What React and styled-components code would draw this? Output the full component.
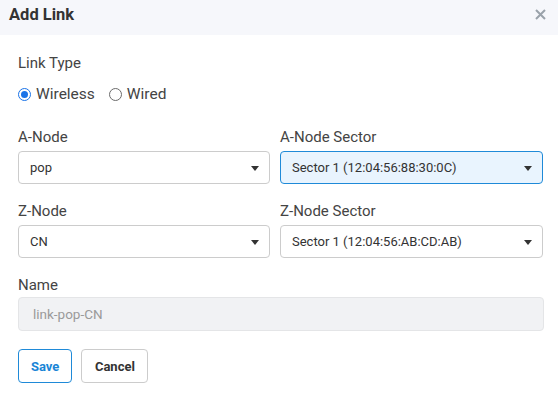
import React from 'react';
import styled, { createGlobalStyle } from 'styled-components';

const Global = createGlobalStyle`
body {
	margin: 0;
	background: #ffffff;
	font-family: Roboto, "Liberation Sans", sans-serif;
	color: #3d3d3d;
}
`;

const Modal = styled.div`
width: 558px;
height: 398px;
background: #ffffff;
display: flex;
flex-direction: column;
`;

const Header = styled.div`
height: 35px;
background: #f6f7fb;
display: flex;
align-items: center;
justify-content: space-between;
padding: 0 12px 0 9px;
box-sizing: border-box;
`;

const Title = styled.h4`
margin: 0;
margin-top: -6px;
font-size: 16.5px;
font-weight: 700;
color: #333333;
`;

const Close = styled.button`
border: none;
background: none;
padding: 0;
margin-top: -6px;
color: #9aa2aa;
display: flex;
cursor: pointer;
`;

const Body = styled.div`
padding: 19px 14px 0 18px;
display: flex;
flex-direction: column;
`;

const Label = styled.div`
font-size: 15px;
line-height: 18px;
color: #444444;
margin-bottom: ${props => (props.gap === undefined ? 5 : props.gap)}px;
`;

const RadioRow = styled.div`
display: flex;
align-items: center;
gap: 14px;
height: 20px;
margin-bottom: 24px;
`;

const RadioLabel = styled.label`
display: flex;
align-items: center;
gap: 5px;
font-size: 15.5px;
color: #444444;
`;

const RadioDot = styled.span`
width: 13px;
height: 13px;
border-radius: 50%;
box-sizing: border-box;
border: 1px solid ${props => (props.checked ? '#1a73e8' : '#6b6b6b')};
display: flex;
align-items: center;
justify-content: center;
&::after {
	content: '';
	width: 7px;
	height: 7px;
	border-radius: 50%;
	background: ${props => (props.checked ? '#1a73e8' : 'transparent')};
}
`;

const Grid = styled.div`
display: grid;
grid-template-columns: 252px 263px;
column-gap: 10px;
row-gap: 18px;
margin-bottom: 18px;
`;

const Field = styled.div`
display: flex;
flex-direction: column;
`;

const Select = styled.div`
height: 33px;
box-sizing: border-box;
border: 1px solid ${props => (props.active ? '#1f8ad8' : '#cccccc')};
background: ${props => (props.active ? '#e9f4fe' : '#ffffff')};
border-radius: 4px;
display: flex;
align-items: center;
justify-content: space-between;
padding: 0 10px 0 11px;
font-size: 13px;
color: #333333;
`;

const Caret = styled.span`
width: 0;
height: 0;
border-left: 4px solid transparent;
border-right: 4px solid transparent;
border-top: 5px solid #333333;
margin-top: 2px;
`;

const NameInput = styled.div`
height: 34px;
box-sizing: border-box;
width: 526px;
border: 1px solid #e4e5e7;
background: #f1f2f4;
border-radius: 4px;
display: flex;
align-items: center;
padding-left: 14px;
font-size: 13.5px;
color: #9a9a9a;
margin-bottom: 18px;
`;

const Actions = styled.div`
display: flex;
gap: 9px;
`;

const Button = styled.button`
height: 34px;
padding: 0 12px;
box-sizing: border-box;
border-radius: 4px;
background: #ffffff;
font-family: inherit;
font-size: 13px;
font-weight: 700;
border: 1px solid ${props => (props.primary ? '#1f8ad8' : '#cccccc')};
color: ${props => (props.primary ? '#1a85d6' : '#333333')};
min-width: ${props => (props.primary ? 54 : 67)}px;
`;

const XIcon = () => (
	<svg width="11" height="11" viewBox="0 0 11 11">
		<path d="M1 1 L10 10 M10 1 L1 10" stroke="currentColor" strokeWidth="2" />
	</svg>
);

const SelectBox = ({ value, active }) => (
	<Select active={active}>
		<span>{value}</span>
		<Caret />
	</Select>
);

export default function App() {
	return (
		<Modal>
			<Global />
			<Header>
				<Title>Add Link</Title>
				<Close><XIcon /></Close>
			</Header>
			<Body>
				<Label gap={12}>Link Type</Label>
				<RadioRow>
					<RadioLabel><RadioDot checked />Wireless</RadioLabel>
					<RadioLabel><RadioDot />Wired</RadioLabel>
				</RadioRow>
				<Grid>
					<Field>
						<Label>A-Node</Label>
						<SelectBox value="pop" />
					</Field>
					<Field>
						<Label>A-Node Sector</Label>
						<SelectBox value="Sector 1 (12:04:56:88:30:0C)" active />
					</Field>
					<Field>
						<Label>Z-Node</Label>
						<SelectBox value="CN" />
					</Field>
					<Field>
						<Label>Z-Node Sector</Label>
						<SelectBox value="Sector 1 (12:04:56:AB:CD:AB)" />
					</Field>
				</Grid>
				<Label gap={3}>Name</Label>
				<NameInput>link-pop-CN</NameInput>
				<Actions>
					<Button primary>Save</Button>
					<Button>Cancel</Button>
				</Actions>
			</Body>
		</Modal>
	);
}
